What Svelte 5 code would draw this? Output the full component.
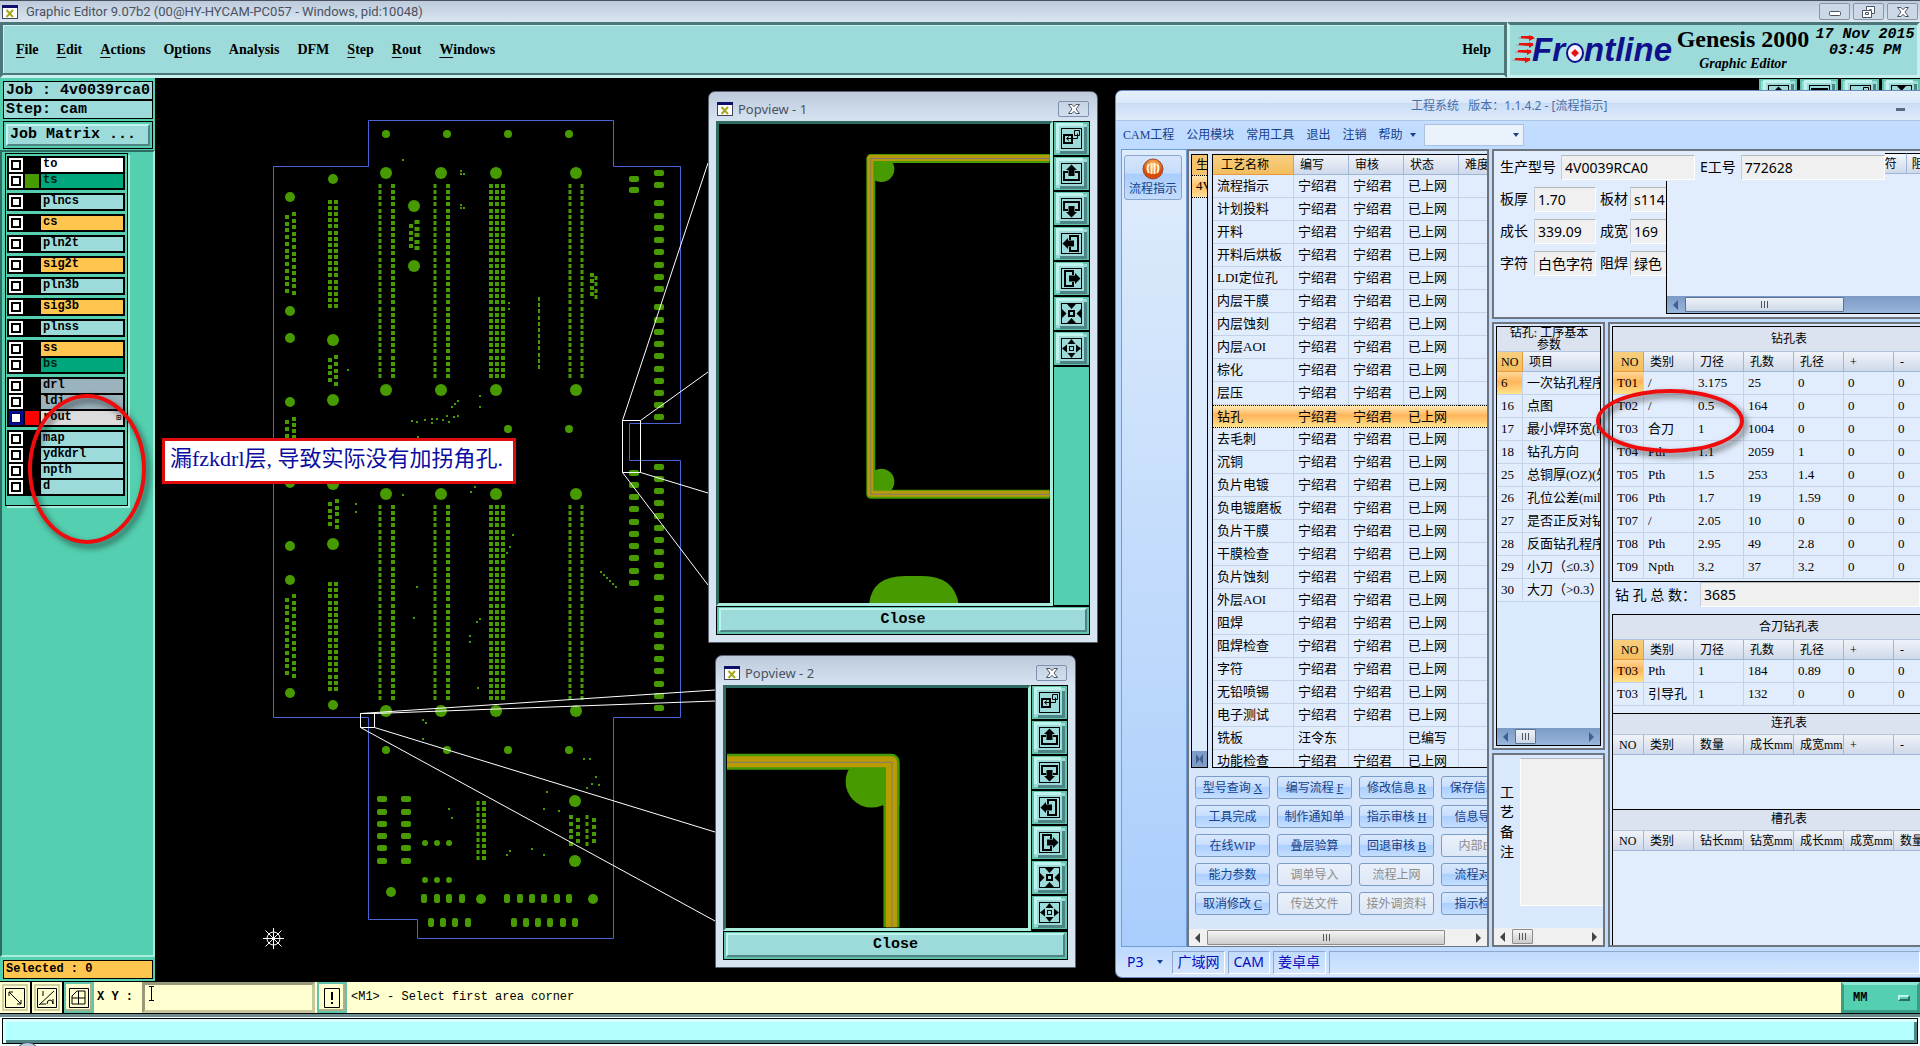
<script>
  const menus = [
    ['', 'F', 'ile'],
    ['', 'E', 'dit'],
    ['', 'A', 'ctions'],
    ['O', 'p', 'tions'],
    ['Analysis', '', ''],
    ['DFM', '', ''],
    ['', 'S', 'tep'],
    ['', 'R', 'out'],
    ['', 'W', 'indows']
  ];

  const layerGroups = [
    [{ name: 'to', kind: 'white' }, { name: 'ts', kind: 'mask', swatch: 'green' }],
    [{ name: 'plncs', kind: 'plane' }],
    [{ name: 'cs', kind: 'signal' }],
    [{ name: 'pln2t', kind: 'plane' }],
    [{ name: 'sig2t', kind: 'signal' }],
    [{ name: 'pln3b', kind: 'plane' }],
    [{ name: 'sig3b', kind: 'signal' }],
    [{ name: 'plnss', kind: 'plane' }],
    [{ name: 'ss', kind: 'signal' }, { name: 'bs', kind: 'mask' }],
    [{ name: 'drl', kind: 'drill' }, { name: 'ldi', kind: 'drill' }, { name: 'rout', kind: 'rout', swatch: 'red', active: true }],
    [{ name: 'map', kind: 'plane' }, { name: 'ydkdrl', kind: 'plane' }, { name: 'npth', kind: 'plane' }, { name: 'd', kind: 'plane' }]
  ];

  // board drawing: round pads are [x, y, r]
  const rounds = [];
  for (const y of [173, 390, 494, 711]) {
    for (const x of [386, 441, 496, 576]) rounds.push([x, y, 6]);
  }
  for (const y of [134, 750]) {
    for (const x of [386, 447, 508, 569]) rounds.push([x, y, 4]);
  }
  rounds.push(
    [333, 179, 5], [290, 197, 5], [290, 311, 5], [290, 338, 5], [333, 340, 6], [333, 400, 6],
    [290, 402, 5], [414, 206, 6], [414, 266, 6], [508, 429, 4], [569, 429, 4], [290, 483, 5],
    [333, 484, 6], [333, 544, 6], [290, 546, 5], [290, 580, 5], [290, 693, 5], [333, 705, 5],
    [575, 801, 6], [575, 861, 6], [391, 892, 5], [481, 899, 5], [593, 899, 5]
  );
  for (const y of [843, 880]) {
    for (const x of [425, 437, 449]) rounds.push([x, y, 3]);
  }

  // pad columns: x, first y, last y, rows, width
  const columns = [
    [287, 217, 291, 12, 4], [294, 214, 293, 13, 4], [330, 202, 306, 18, 4], [336, 202, 306, 18, 4],
    [330, 360, 380, 4, 4], [336, 357, 384, 5, 4], [411, 226, 246, 4, 4], [417, 222, 248, 5, 5],
    [287, 422, 436, 3, 4], [294, 419, 437, 4, 4], [330, 504, 524, 4, 4], [337, 501, 527, 5, 4],
    [330, 584, 689, 18, 4], [336, 584, 689, 18, 4], [287, 600, 673, 12, 4], [294, 596, 676, 13, 4],
    [592, 275, 294, 4, 4], [596, 278, 297, 4, 3], [539, 299, 367, 12, 2],
    [478, 803, 858, 10, 3], [484, 803, 858, 10, 4], [571, 817, 844, 5, 4], [578, 820, 841, 4, 4],
    [587, 817, 844, 5, 3], [594, 820, 841, 4, 4]
  ];
  for (const [top, bottom] of [[186, 376], [507, 698]]) {
    for (const [x, w] of [[380, 3], [393, 4], [435, 3], [448, 4], [491, 4], [497, 4], [503, 4], [570, 3], [582, 3]]) {
      columns.push([x, top, bottom, 32, w]);
    }
  }
  const pads = columns.flatMap(([x, first, last, rows, w]) =>
    Array.from({ length: rows }, (_, i) => {
      const y = first + ((last - first) * i) / (rows - 1);
      return { x: x - w / 2, y: Math.round(y) - 2, w };
    })
  );

  const wide = [];
  for (const y of [173, 185, 203, 216, 228, 240, 252, 265, 277, 289, 307, 320, 332, 344, 356, 369, 381, 393, 405, 417,
    467, 479, 491, 503, 516, 528, 540, 552, 565, 577, 598, 610, 622, 635, 647, 659, 671, 684, 696, 708]) wide.push([659, y]);
  for (const y of [179, 190, 473, 485, 497, 509, 522, 534, 546, 558, 571, 583]) wide.push([634, y]);
  for (const y of [799, 812, 824, 836, 848, 861]) wide.push([382, y], [406, y]);

  const tall = [
    ...[424, 437, 449, 462, 507, 520, 532, 544, 557, 569].map((x) => [x, 898]),
    ...[431, 443, 455, 468, 514, 526, 538, 550, 563, 575].map((x) => [x, 922])
  ];

  const vias = [
    [403, 160], [461, 171], [461, 174], [464, 174], [461, 205], [461, 208], [464, 208], [509, 303], [509, 309],
    [348, 370], [458, 401], [455, 404], [452, 407], [480, 396], [480, 407], [412, 421], [417, 422], [425, 420],
    [432, 419], [432, 423], [437, 419], [443, 420], [447, 416], [449, 422], [454, 417], [458, 416], [418, 437],
    [403, 495], [475, 487], [471, 492], [356, 504], [356, 512], [513, 535], [510, 547], [507, 553], [417, 587],
    [414, 618], [480, 619], [477, 622], [470, 636], [470, 642], [478, 688], [601, 572], [604, 575], [607, 578],
    [610, 581], [613, 584], [616, 587], [423, 720], [426, 723], [423, 739], [584, 759], [590, 759], [596, 777],
    [592, 784], [599, 785], [587, 788], [547, 792], [544, 809], [559, 811], [449, 809], [452, 818], [510, 851],
    [507, 855], [532, 849], [544, 855]
  ];

  const names = ['流程指示', '计划投料', '开料', '开料后烘板', 'LDI定位孔', '内层干膜', '内层蚀刻', '内层AOI', '棕化', '层压', '钻孔',
    '去毛刺', '沉铜', '负片电镀', '负电镀磨板', '负片干膜', '干膜检查', '负片蚀刻', '外层AOI', '阻焊', '阻焊检查', '字符',
    '无铅喷锡', '电子测试', '铣板', '功能检查'];
  const steps = names.map((name) =>
    name === '铣板' ? [name, '汪令东', '', '已编写'] : [name, '宁绍君', '宁绍君', '已上网']
  );

  const actions = [
    ['型号查询', 'X'], ['编写流程', 'F'], ['修改信息', 'R'], ['保存信息', 'S'],
    ['工具完成'], ['制作通知单'], ['指示审核', 'H'], ['信息导入'],
    ['在线WIP'], ['叠层验算'], ['回退审核', 'B'], ['内部EQ', '', true],
    ['能力参数'], ['调单导入', '', true], ['流程上网', '', true], ['流程对比'],
    ['取消修改', 'C'], ['传送文件', '', true], ['接外调资料', '', true], ['指示检查']
  ];

  const params = [
    ['6', '一次钻孔程序'], ['16', '点图'], ['17', '最小焊环宽(mil)'], ['18', '钻孔方向'], ['25', '总铜厚(OZ)(外)'],
    ['26', '孔位公差(mil)'], ['27', '是否正反对钻'], ['28', '反面钻孔程序'], ['29', '小刀（≤0.3）'], ['30', '大刀（>0.3）']
  ];

  const drillHead = ['NO', '类别', '刀径', '孔数', '孔径', '+', '-'];
  const drills = [
    ['T01', '/', '3.175', '25', '0', '0', '0'],
    ['T02', '/', '0.5', '164', '0', '0', '0'],
    ['T03', '合刀', '1', '1004', '0', '0', '0'],
    ['T04', 'Pth', '1.1', '2059', '1', '0', '0'],
    ['T05', 'Pth', '1.5', '253', '1.4', '0', '0'],
    ['T06', 'Pth', '1.7', '19', '1.59', '0', '0'],
    ['T07', '/', '2.05', '10', '0', '0', '0'],
    ['T08', 'Pth', '2.95', '49', '2.8', '0', '0'],
    ['T09', 'Npth', '3.2', '37', '3.2', '0', '0']
  ];
  const merged = [
    ['T03', 'Pth', '1', '184', '0.89', '0', '0'],
    ['T03', '引导孔', '1', '132', '0', '0', '0']
  ];

  const tools = ['area', 'up', 'down', 'left', 'right', 'in', 'out'];
</script>

{#snippet xicon()}
  <svg class="xicon" width="16" height="14" viewBox="0 0 16 14" aria-hidden="true">
    <rect x="0.5" y="0.5" width="15" height="13" fill="#fff" stroke="#445" />
    <rect width="16" height="3" fill="#10106a" />
    <path d="M4.500 5l6.500 7M11 5l-6.500 7" stroke="#a8a820" stroke-width="2" />
  </svg>
{/snippet}

{#snippet closeicon()}
  <svg width="14" height="12" viewBox="0 0 14 12" aria-hidden="true">
    <path d="M1.500 1.500h3.500l2 2.200 2-2.200h3.500L9 6l3.500 4.500H9L7 8.300 5 10.500H1.500L5 6z" fill="#fff" stroke="#4a5463" />
  </svg>
{/snippet}

{#snippet tool(kind)}
  <button class="tool" aria-label={kind}>
    <svg width="21" height="21" viewBox="0 0 21 21" aria-hidden="true">
      <rect x="0.5" y="0.5" width="20" height="20" fill="none" stroke="#000" />
      {#if kind === 'area'}
        <rect x="3" y="7" width="8" height="8" fill="none" stroke="#000" stroke-width="2" />
        <path d="M13.500 2.500h5v5h-5zM16.500 5.500v5H6M8 8.500l-2.500 2L8 12.500" fill="none" stroke="#000" />
      {:else if kind === 'in'}
        <path d="M6 1h9l-4.500 5zM6 20h9l-4.500-5zM1 6v9l4.500-4.500zM20 6v9l-4.500-4.500z" />
        <rect x="8" y="8" width="5" height="5" fill="none" stroke="#000" stroke-width="2" />
      {:else if kind === 'out'}
        <path d="M6.500 6h8l-4-5zM6.500 15h8l-4 5zM6 6.500v8l-5-4zM15 6.500v8l5-4z" />
        <rect x="8.500" y="8.500" width="4" height="4" fill="none" stroke="#000" />
      {:else}
        <g class="turn-{kind}">
          <path d="M7 9H3v8h15V9h-4" fill="none" stroke="#000" stroke-width="2" />
          <path d="M10.500 1.500L16 7h-2.500v6h-6V7H5z" />
        </g>
      {/if}
    </svg>
  </button>
{/snippet}

{#snippet scroller(look)}
  <div class="scroller {look}" aria-hidden="true">
    <svg width="6" height="10" viewBox="0 0 6 10"><path d="M5 0v10L0 5z" fill="currentColor" /></svg>
    <span class="track"><span class="thumb"><i></i><i></i><i></i></span></span>
    <svg class="end" width="6" height="10" viewBox="0 0 6 10"><path d="M1 0v10l5-5z" fill="currentColor" /></svg>
  </div>
{/snippet}

{#snippet holes(title, head, rows, lit)}
  <table class="grid holes">
    <caption>{title}</caption>
    <thead>
      <tr>{#each head as h, i}<th class:hot={lit && i === 0}>{h}</th>{/each}</tr>
    </thead>
    <tbody>
      {#each rows as row, r}
        <tr>{#each row as cell, i}<td class:hot={r === 0 && i === 0}>{cell}</td>{/each}</tr>
      {/each}
    </tbody>
  </table>
{/snippet}

<div class="screen">
  <header class="titlebar">
    {@render xicon()}
    <h1>Graphic Editor 9.07b2 (00@HY-HYCAM-PC057 - Windows, pid:10048)</h1>
    <div class="winbtns">
      <button aria-label="Minimize"><svg width="12" height="12"><rect x="0.5" y="5.5" width="11" height="4" rx="1" fill="#fff" stroke="#4a5463" /></svg></button>
      <button aria-label="Restore"><svg width="13" height="12"><path d="M4.500.500h8v7h-3v4h-9v-7h4z" fill="#fff" stroke="#4a5463" /><path d="M3.500 6.500h3v2h-3zM4.500 4.500h5v3M7.500 3.500h2" fill="none" stroke="#4a5463" /></svg></button>
      <button aria-label="Close">{@render closeicon()}</button>
    </div>
  </header>

  <div class="topbar">
    <nav class="menubar">
      {#each menus as [before, key, after]}
        <button>{before}{#if key}<u>{key}</u>{/if}{after}</button>
      {/each}
      <button class="help">Help</button>
    </nav>
    <section class="brand">
      <svg class="logo" width="160" height="40" viewBox="0 0 160 40" role="img" aria-label="Frontline">
        <g fill="#e8120c">
          <path d="M4 8l12-1v-2l6 3-6 3v-2zM2 15l14-1v-2l5 3-5 3v-2zM1 22l13-1v-2l5 3-5 3v-2zM-2 30l14-1v-2l6 3-6 3v-2z" />
          <path d="M8 7h12M6 14h14M5 21h13M2 29h15" stroke="#e8120c" stroke-width="2" />
        </g>
        <g class="wordmark" fill="#10108c">
          <text x="19" y="31">Fr</text>
          <text x="71" y="31">ntline</text>
        </g>
        <ellipse cx="62" cy="23" rx="8" ry="9" fill="#f4f7ff" stroke="#10108c" stroke-width="2" />
        <path d="M62 19l4 4-4 4-4-4z" fill="#e8120c" />
      </svg>
      <div class="product">
        <strong>Genesis 2000</strong>
        <em>Graphic Editor</em>
      </div>
      <div class="clock"><span>17 Nov 2015</span><span>03:45 PM</span></div>
    </section>
  </div>

  <main class="work">
    <aside class="sidebar">
      <div class="job">
        <p>Job : 4v0039rca0</p>
        <p>Step: cam</p>
      </div>
      <div class="matrix"><button>Job Matrix ...</button></div>
      <div class="layers">
        <div class="layerlist">
          {#each layerGroups as group}
            <div class="group">
              {#each group as layer}
                <label class="layer {layer.kind}">
                  <input type="checkbox" class:active={layer.active} />
                  <span class="swatch {layer.swatch ?? ''}"></span>
                  <span class="name">{layer.name}{#if layer.active}<b>⊞</b>{/if}</span>
                </label>
              {/each}
            </div>
          {/each}
        </div>
      </div>
      <p class="selected">Selected : 0</p>
      <span class="ring layers-ring"></span>
    </aside>

    <div class="stage">
      <svg class="board" viewBox="155 78 1765 903" preserveAspectRatio="xMinYMin slice" aria-label="PCB panel">
        <g fill="#479a00">
          {#each rounds as [x, y, r]}<circle cx={x} cy={y} {r} />{/each}
          {#each wide as [x, y]}<rect x={x - 5} y={y - 3} width="10" height="6" rx="2" />{/each}
          {#each tall as [x, y]}<rect x={x - 3} y={y - 4} width="6" height="9" rx="2" />{/each}
          {#each vias as [x, y]}<rect x={x - 1} y={y - 1} width="2" height="2" />{/each}
          {#each pads as p}<rect x={p.x} y={p.y} width={p.w} height="4" />{/each}
        </g>
        <path
          d="M273.500 166.500H368.500V120.500H613.500V166.500H680.500V423.500H629.500V460.500H680.500V717.500H613.500V938.500H417.500V919.500H368.500V717.500H273.500Z"
          fill="none" stroke="#4864d8" />
        <g fill="none" stroke="#fff">
          <path d="M622.500 420.500h18v52h-18zM622.500 420.500L708 163M640.500 420.500L708 372M640.500 472.500L708 493M622.500 472.500L708 585" />
          <path d="M360.500 713.500h14v14h-14zM360.500 713.500L715 690M374.500 713.500L715 701M374.500 727.500L715 832M360.500 727.500L715 921" />
          <circle cx="273.500" cy="938.500" r="6.500" />
          <path d="M263 938.500h21M273.500 928v21M265.500 930.500l16 16M281.500 930.500l-16 16" />
        </g>
      </svg>

      <p class="callout">漏fzkdrl层, 导致实际没有加拐角孔.</p>

      <div class="sidetools">
        {@render tool('up')}{@render tool('down')}{@render tool('area')}{@render tool('in')}
      </div>

      <section class="popview one">
        <header>{@render xicon()}<h2>Popview - 1</h2><button class="x" aria-label="Close window">{@render closeicon()}</button></header>
        <div class="popbody">
          <div class="view">
            <svg viewBox="719 124 331 478" preserveAspectRatio="xMinYMin slice" aria-hidden="true">
              <g fill="#479a00">
                <circle cx="881" cy="169" r="13" />
                <circle cx="881" cy="481" r="13" />
                <path d="M869 602q3-27 36-27h17q31 0 36 27z" />
              </g>
              <g fill="none" stroke-linejoin="round">
                <path d="M1049 158.500H870.500V493.500H1049" stroke="#479a00" stroke-width="9" />
                <path d="M1049 158H870V493H1049" stroke="#b79a08" stroke-width="6" />
                <path d="M1049 158.500H870.500V493.500H1049" stroke="#80787a" />
              </g>
            </svg>
          </div>
          <div class="tools">{#each tools as t}{@render tool(t)}{/each}</div>
        </div>
        <div class="closebar"><button>Close</button></div>
      </section>

      <section class="popview two">
        <header>{@render xicon()}<h2>Popview - 2</h2><button class="x" aria-label="Close window">{@render closeicon()}</button></header>
        <div class="popbody">
          <div class="view">
            <svg viewBox="726 688 303 241" preserveAspectRatio="xMinYMin slice" aria-hidden="true">
              <circle cx="872" cy="782" r="26" fill="#479a00" />
              <path d="M883 762h17v44h-17z" fill="#479a00" />
              <g fill="none" stroke-linejoin="round">
                <path d="M727 762H892V928" stroke="#479a00" stroke-width="16" />
                <path d="M727 762H892V928" stroke="#b99c04" stroke-width="11" />
                <path d="M727 762.500H892.500V928" stroke="#80787a" />
              </g>
            </svg>
          </div>
          <div class="tools">{#each tools as t}{@render tool(t)}{/each}</div>
        </div>
        <div class="closebar"><button>Close</button></div>
      </section>

      <section class="app">
        <header class="apptitle"><h2>工程系统&nbsp;&nbsp; 版本：1.1.4.2 - [流程指示]</h2><button class="min" aria-label="Minimize"></button></header>
        <nav class="appmenu">
          <button>CAM工程</button><button>公用模块</button><button>常用工具</button>
          <button>退出</button><button>注销</button><button>帮助</button>
          <span class="caret"></span>
          <span class="combo"><select aria-label="模块"><option></option></select><span class="caret"></span></span>
        </nav>
        <div class="appbody">
          <div class="modules">
            <button>
              <svg width="22" height="22" viewBox="0 0 22 22" aria-hidden="true">
                <defs><radialGradient id="orb" cy="0.3"><stop offset="0" stop-color="#ffd070" /><stop offset="1" stop-color="#d84a08" /></radialGradient></defs>
                <circle cx="11" cy="11" r="10" fill="url(#orb)" stroke="#9a4a3a" />
                <path d="M7 6q-3 4 0 9M9.500 5v11M12.500 5v11M15 6q3 4 0 9" fill="none" stroke="#fff2d0" stroke-width="2" />
              </svg>
              流程指示
            </button>
          </div>

          <div class="flow">
            <div class="grids">
              <div class="strip">
                <span class="striphead">生</span><span class="stripcell">4V</span>
                <svg class="stripend" width="15" height="16" viewBox="0 0 15 16" aria-hidden="true"><path d="M4 3v10l4-5zM11 3v10L7 8z" fill="#3d5f92" /></svg>
              </div>
              <div class="stepbox">
                <table class="grid steps">
                  <thead><tr><th class="hot">工艺名称</th><th>编写</th><th>审核</th><th>状态</th><th>难度</th></tr></thead>
                  <tbody>
                    {#each steps as step}
                      <tr class:current={step[0] === '钻孔'}>
                        {#each step as cell}<td>{cell}</td>{/each}<td></td>
                      </tr>
                    {/each}
                  </tbody>
                </table>
              </div>
            </div>
            <div class="actions">
              {#each actions as [label, key, off]}
                <button disabled={off}>{label}{#if key}&nbsp;<u>{key}</u>{/if}</button>
              {/each}
            </div>
            {@render scroller('grey long')}
          </div>

          <div class="detail">
            <div class="summary">
              <div class="line">
                <label for="model">生产型号</label><input id="model" class="model" value="4V0039RCA0" />
                <label for="eno">E工号</label><input id="eno" class="eno" value="772628" />
                <span class="cut">符</span><span class="cut">阻</span>
              </div>
              <div class="lower">
                <div class="fields">
                  <label for="thick">板厚</label><input id="thick" value="1.70" />
                  <label for="mat">板材</label><input id="mat" value="s1141" />
                  <label for="len">成长</label><input id="len" value="339.09" />
                  <label for="wid">成宽</label><input id="wid" value="169" />
                  <label for="silk">字符</label><input id="silk" value="白色字符" />
                  <label for="mask">阻焊</label><input id="mask" value="绿色" />
                </div>
                <div class="blank">{@render scroller('blue wide')}</div>
              </div>
            </div>

            <div class="panes">
              <div class="leftpanes">
                <div class="pane parampane">
                  <div class="parambox">
                    <table class="grid params">
                      <caption>钻孔: 工序基本<br />参数</caption>
                      <thead><tr><th class="hot">NO</th><th>项目</th></tr></thead>
                      <tbody>
                        {#each params as [no, item], i}
                          <tr><td class:hot={i === 0}>{no}</td><td>{item}</td></tr>
                        {/each}
                      </tbody>
                    </table>
                    {@render scroller('blue short')}
                  </div>
                </div>
                <div class="pane notepane">
                  <div class="note">
                    <label for="note">工艺备注</label>
                    <textarea id="note"></textarea>
                  </div>
                  {@render scroller('grey short')}
                </div>
              </div>
              <div class="pane holepane">
                <div class="holebox drillbox">{@render holes('钻孔表', drillHead, drills, true)}</div>
                <div class="total"><label for="total">钻 孔 总 数：</label><input id="total" value="3685" /></div>
                <div class="holebox mergebox">{@render holes('合刀钻孔表', drillHead, merged, true)}</div>
                <div class="holebox linkbox">{@render holes('连孔表', ['NO', '类别', '数量', '成长mm', '成宽mm', '+', '-'], [], false)}</div>
                <div class="holebox slotbox">{@render holes('槽孔表', ['NO', '类别', '钻长mm', '钻宽mm', '成长mm', '成宽mm', '数量'], [], false)}</div>
              </div>
            </div>
          </div>
        </div>
        <footer class="status">
          <span class="port">P3</span><span class="caret"></span>
          <span class="cell">广域网</span><span class="cell">CAM</span><span class="cell">姜卓卓</span><span class="cell rest"></span>
        </footer>
        <span class="ring drill-ring"></span>
      </section>
    </div>
  </main>

  <div class="prompt">
    <button class="mode" aria-label="Window select"><svg width="20" height="20"><path d="M.500.500h19v19H.500zM4 4l12 12M4 8V4h4M16 12v4h-4" fill="none" stroke="#000" /></svg></button>
    <button class="mode" aria-label="Angle"><svg width="20" height="20"><path d="M.500.500h19v19H.500zM2 17L17 3M6 3v5M3 16h6M10 16q0-4 3-4t3 4M16 11v5" fill="none" stroke="#000" /></svg></button>
    <button class="mode framed" aria-label="Grid"><svg width="20" height="20"><path d="M.500.500h19v19H.500zM3 8l5-5h8v13H3zM3 10h13M9.500 3v13" fill="none" stroke="#000" /></svg></button>
    <label for="xy">X Y :</label>
    <span class="entry">
      <input id="xy" />
      <svg width="7" height="15" viewBox="0 0 7 15" aria-hidden="true"><path d="M1 .500h5M3.500.500v14M1 14.500h5" fill="none" stroke="#000" /></svg>
    </span>
    <button class="mode framed alert" aria-label="Alert"><svg width="16" height="20"><path d="M.500.500h15v19H.500z" fill="none" stroke="#000" /><path d="M8 4v8M8 14v2" stroke="#000" stroke-width="2" /></svg></button>
    <p>&lt;M1&gt; - Select first area corner</p>
    <button class="units">MM<i></i></button>
  </div>
  <footer class="messages"><div></div><span class="orb"></span></footer>
</div>

<style>
  :global(body) {
    margin: 0;
    background: #000;
  }

  .screen {
    --teal: #54cfb0;
    --aqua: #9cdbda;
    --green: #479a00;
    --cjk: "Liberation Serif", "Noto Sans CJK SC", serif;
    --ui: "Noto Sans", "Noto Sans CJK SC", sans-serif;
    --mono: "Liberation Mono", monospace;
    display: flex;
    flex-direction: column;
    min-height: 100vh;
    overflow: hidden;
    font-family: var(--mono);
    color: #000;
  }

  * {
    box-sizing: border-box;
  }

  p, h1, h2 {
    margin: 0;
    font-weight: normal;
  }

  button, input, select, textarea {
    margin: 0;
    padding: 0;
    border: 0;
    border-radius: 0;
    font: inherit;
    color: inherit;
    background: none;
    appearance: none;
  }

  .titlebar {
    display: flex;
    align-items: center;
    height: 22px;
    padding: 0 2px;
    gap: 8px;
    border-top: 1px solid #4a5260;
    background: linear-gradient(#bccadb, #dbe6f2);
  }

  .titlebar h1 {
    flex: 1;
    font: 13px/20px Roboto, sans-serif;
    color: #4a5260;
  }

  .winbtns {
    display: flex;
    gap: 3px;
  }

  .winbtns button {
    display: grid;
    place-items: center;
    width: 31px;
    height: 17px;
    border: 1px solid #8894a8;
    border-radius: 2px;
    background: #ccd8e6;
  }

  .topbar {
    display: flex;
    height: 56px;
    background: #4d7678;
  }

  .menubar {
    flex: 1;
    display: flex;
    align-items: center;
    gap: 18px;
    padding: 0 13px;
    border: 3px solid;
    border-color: #4d7678 #4d7678 #c8f0ee #4d7678;
    background: var(--aqua);
    box-shadow: inset 0 -2px #4d7678, inset 1px 1px #c8f4f4;
    font: bold 14px/20px "Liberation Serif", serif;
  }

  .menubar .help {
    margin-left: auto;
  }

  u {
    text-underline-offset: 3px;
  }

  .brand {
    display: flex;
    width: 413px;
    padding-left: 3px;
    border: 3px solid;
    border-color: #4d7678 #c8f0ee #c8f0ee #c8f0ee;
    background: var(--aqua);
  }

  .logo {
    margin-top: 5px;
    overflow: visible;
  }

  .wordmark {
    font: italic bold 33px "Liberation Sans", sans-serif;
  }

  .product {
    display: flex;
    flex-direction: column;
    width: 140px;
    text-align: center;
    font-family: "Liberation Serif", serif;
  }

  .product strong {
    font-size: 24px;
    line-height: 28px;
  }

  .product em {
    font: italic bold 14px/22px "Liberation Serif", serif;
  }

  .clock {
    display: flex;
    flex-direction: column;
    align-items: center;
    flex: 1;
    padding-top: 2px;
    font: italic bold 15px/16px var(--mono);
    white-space: nowrap;
  }

  .work {
    flex: 1;
    display: flex;
    background: #000;
  }

  .sidebar {
    position: relative;
    display: flex;
    flex-direction: column;
    width: 155px;
    padding: 3px 2px 2px 3px;
    background: var(--teal);
  }

  .job p {
    height: 19px;
    padding: 0 2px;
    border: 1px solid #000;
    background: var(--aqua);
    font: bold 15px/17px var(--mono);
    white-space: nowrap;
    overflow: hidden;
  }

  .matrix {
    margin: 2px 0 1px;
    padding: 2px;
    border: 1px solid #000;
  }

  .matrix button {
    width: 100%;
    height: 22px;
    padding-left: 2px;
    border: 2px solid;
    border-color: #c4f2f0 #4d8486 #4d8486 #c4f2f0;
    background: var(--aqua);
    font: bold 15px/18px var(--mono);
    text-align: left;
  }

  .layers {
    flex: 1;
    margin: 0 -2px 3px -3px;
    border: 2px solid;
    border-color: #2f6b60 #a8ecdc #a8ecdc #2f6b60;
    background: var(--teal);
  }

  .layerlist {
    display: flex;
    flex-direction: column;
    gap: 3px;
    width: 123px;
    margin: 1px 0 0 3px;
    padding: 2px 2px 9px 1px;
    border: 1px solid #000;
    box-shadow: 2px 2px #a8ecdc;
  }

  .group {
    display: flex;
    flex-direction: column;
    gap: 2px;
    padding: 2px;
    background: #000;
  }

  .layer {
    display: grid;
    grid-template-columns: 14px 14px 1fr;
    gap: 2px;
    height: 14px;
    font: bold 12px/13px var(--mono);
  }

  .layer input {
    width: 14px;
    height: 14px;
    border: 2px solid #fff;
    background: #fff;
    box-shadow: inset 0 0 0 2px #000;
  }

  .layer input.active {
    border-color: #0a0a9a;
    box-shadow: inset 0 0 0 1px #000060;
  }

  .swatch.green {
    background: var(--green);
  }

  .swatch.red {
    background: #f00;
  }

  .name {
    display: flex;
    justify-content: space-between;
    padding: 0 2px;
    background: var(--aqua);
  }

  .name b {
    font-size: 8px;
  }

  .white .name {
    background: #fff;
  }

  .mask .name {
    background: #00a67c;
    color: #021;
  }

  .signal .name {
    background: #ffc64f;
  }

  .drill .name {
    background: #9bb3bd;
  }

  .rout .name {
    background: #dcdcdc;
  }

  .selected {
    height: 19px;
    padding: 0 2px;
    border: 1px solid #000;
    background: #ffc64f;
    font: bold 12px/17px var(--mono);
  }

  .ring {
    position: absolute;
    z-index: 5;
    border: 4px solid #ee0c0c;
    border-radius: 50%;
    filter: drop-shadow(3px 4px 3px rgba(0, 0, 0, 0.6));
    pointer-events: none;
  }

  .layers-ring {
    left: 28px;
    top: 316px;
    width: 118px;
    height: 150px;
  }

  .drill-ring {
    left: 480px;
    top: 298px;
    width: 148px;
    height: 64px;
  }

  .stage {
    position: relative;
    flex: 1;
    min-width: 0;
    overflow: hidden;
  }

  .board {
    position: absolute;
    width: 100%;
    height: 100%;
  }

  .callout {
    position: absolute;
    left: 7px;
    top: 360px;
    padding: 4px 10px 8px 5px;
    border: 3px solid #e00c0c;
    background: #fff;
    color: #0c0ca0;
    font: 22px/28px var(--cjk);
    white-space: nowrap;
  }

  .sidetools {
    position: absolute;
    right: 0;
    top: 1px;
    display: grid;
    grid-template-columns: repeat(4, 38px);
    gap: 3px;
  }

  .popview {
    position: absolute;
    display: flex;
    flex-direction: column;
    padding: 0 7px 7px;
    border: 1px solid #59616c;
    border-radius: 7px 7px 0 0;
    background: linear-gradient(#bccadb, #d7e4f2 30px);
  }

  .popview.one {
    left: 553px;
    top: 13px;
    width: 390px;
    height: 552px;
  }

  .popview.two {
    left: 560px;
    top: 577px;
    width: 361px;
    height: 313px;
  }

  .popview header {
    display: flex;
    align-items: center;
    gap: 5px;
    height: 29px;
    padding: 5px 1px 0;
  }

  .popview h2 {
    flex: 1;
    font: 13px/20px var(--ui);
    color: #4a5260;
  }

  .popview .x {
    display: grid;
    place-items: center;
    width: 31px;
    height: 16px;
    border: 1px solid #8090b0;
    border-radius: 2px;
  }

  .popbody {
    flex: 1;
    display: flex;
    min-height: 0;
  }

  .view {
    flex: 1;
    min-width: 0;
    border: 3px solid;
    border-color: #2f6b60 #a8ecdc #a8ecdc #2f6b60;
    background: #000;
  }

  .view svg {
    display: block;
    width: 100%;
    height: 100%;
  }

  .tools {
    width: 37px;
    border: 1px solid #000;
    background: var(--teal);
  }

  .tools .tool {
    margin-bottom: 2px;
    box-shadow: 0 2px #000;
  }

  .tool {
    display: grid;
    place-items: center;
    width: 100%;
    height: 33px;
    border: 2px solid #5fc4ab;
    background: var(--aqua);
  }

  .tool svg {
    box-shadow: 0 0 0 2px var(--aqua), -2px -2px 0 3px #bff4ee, 2px 2px 0 3px #4d8486;
  }

  .turn-down {
    transform: rotate(180deg);
    transform-origin: center;
  }

  .turn-left {
    transform: rotate(-90deg);
    transform-origin: center;
  }

  .turn-right {
    transform: rotate(90deg);
    transform-origin: center;
  }

  .closebar {
    padding: 1px 2px 2px;
    border: 1px solid #000;
    background: #5fc4ab;
  }

  .closebar button {
    display: block;
    width: 100%;
    height: 24px;
    border: 2px solid;
    border-color: #bff4ee #4d8486 #4d8486 #bff4ee;
    background: var(--aqua);
    font: bold 15px/20px var(--mono);
  }

  /* process system window */
  .app {
    position: absolute;
    left: 960px;
    right: 0;
    top: 12px;
    bottom: 3px;
    display: flex;
    flex-direction: column;
    padding-left: 5px;
    border: 1px solid #6a8cc0;
    border-right: 0;
    border-radius: 7px 0 0 7px;
    overflow: hidden;
    background: linear-gradient(#dfeafa, #bfdbff 40px, #bfdbff 860px, #d6e6fb);
    font: 13px/20px var(--cjk);
  }

  .apptitle {
    display: flex;
    align-items: center;
    height: 30px;
    margin-left: -5px;
    border-bottom: 1px solid #a8c4ea;
    background: linear-gradient(#e6f0fc, #dbe8f9 40%, #cbddf5 42%, #deebfb);
  }

  .apptitle h2 {
    flex: 1;
    padding-left: 295px;
    font: 12px/20px var(--ui);
    color: #4a6ea8;
  }

  .min {
    width: 9px;
    height: 3px;
    margin: 8px 15px 0 0;
    background: #5a6a84;
  }

  .appmenu {
    display: flex;
    align-items: center;
    gap: 12px;
    height: 28px;
    padding-left: 2px;
    font: 12px/20px var(--cjk);
    color: #15428b;
  }

  .appmenu > .caret {
    margin: 0 -4px;
  }

  .combo {
    position: relative;
    display: flex;
  }

  .combo select {
    width: 100px;
    height: 22px;
    border: 1px solid #abc1de;
    background: #eaf2fb;
  }

  .combo .caret {
    position: absolute;
    right: 5px;
    top: 9px;
  }

  .caret {
    border: 3px solid transparent;
    border-top: 4px solid #15428b;
    border-bottom: 0;
  }

  .appbody {
    flex: 1;
    display: flex;
    min-height: 0;
  }

  .modules {
    width: 66px;
    padding: 5px 2px;
    border: 1px solid #6f9dd9;
    background: linear-gradient(#dfecfb, #a9cdfc);
  }

  .modules button {
    display: flex;
    flex-direction: column;
    align-items: center;
    width: 58px;
    height: 45px;
    padding-top: 2px;
    border: 1px solid #8aa6cf;
    border-radius: 3px;
    background: linear-gradient(#d5e5fa, #c6ddfb 40%, #a9cdfc 42%, #c4dcfc);
    color: #15428b;
    font: 12px/18px var(--cjk);
    white-space: nowrap;
  }

  .flow {
    display: flex;
    flex-direction: column;
    width: 302px;
    overflow: hidden;
    border: 2px solid #70747c;
    border-bottom-width: 1px;
    background: #d7e6fb;
  }

  .grids {
    display: flex;
    gap: 4px;
    height: 614px;
    margin: 3px 0 0 2px;
  }

  .strip {
    display: flex;
    flex-direction: column;
    width: 17px;
    border: 1px solid #000;
    overflow: hidden;
    background: #dbeafd;
  }

  .strip span {
    flex: none;
    padding-left: 4px;
    white-space: nowrap;
  }

  .striphead {
    height: 20px;
    background: #f5c36c;
    font-size: 12px;
  }

  .stripcell {
    height: 23px;
    border: dotted #000;
    border-width: 1px 0;
    background: linear-gradient(#ffe7b0, #ffc268 45%, #ffdf9a);
  }

  .stripend {
    margin-top: auto;
    background: #7f9cc4;
  }

  .stepbox {
    flex: 1;
    min-width: 0;
    overflow: hidden;
    border: 1px solid #000;
    border-right: 0;
    background: #dfeafc;
  }

  .grid {
    border-collapse: separate;
    border-spacing: 0;
    table-layout: fixed;
    background: #e1ecfd;
  }

  .grid th, .grid td {
    height: 23px;
    padding: 0 0 0 4px;
    border: solid #c5d3e8;
    border-width: 0 1px 1px 0;
    text-align: left;
    white-space: nowrap;
    overflow: hidden;
    line-height: 20px;
  }

  .grid th {
    height: 20px;
    padding-left: 6px;
    border-color: #9eb6d8;
    background: linear-gradient(#f0f3f9, #cfd9ea);
    font-weight: normal;
    font-size: 12px;
    line-height: 18px;
  }

  .grid th.hot {
    padding-left: 8px;
    border-color: #e89a3c;
    background: linear-gradient(#f6cf80, #f3bd5e);
  }

  .grid td.hot {
    background: linear-gradient(#ffd898, #ffb559 45%, #ffe38a);
  }

  .grid caption {
    height: 25px;
    overflow: hidden;
    border-bottom: 1px solid #b4c4dc;
    background: #dbe3f1;
    font-size: 12px;
    line-height: 24px;
  }

  .steps {
    width: 310px;
  }

  .steps th {
    width: 55px;
  }

  .steps th:first-child {
    width: 81px;
  }

  .steps th:last-child {
    width: 64px;
  }

  .current td {
    border-top: 1px dotted #000;
    border-bottom: 1px dotted #000;
    border-right: 0;
    background: linear-gradient(#ffe9b4, #ffb55c 45%, #ffe28c);
    line-height: 19px;
  }

  .actions {
    display: grid;
    grid-template-columns: repeat(4, 75px);
    gap: 6px 7px;
    padding: 8px 0 12px 6px;
  }

  .actions button {
    height: 23px;
    border: 1px solid #7c9cc8;
    border-radius: 3px;
    background: linear-gradient(#d8e8fd, #c8dffe 45%, #abcfff 48%, #c4deff);
    color: #15428b;
    font: 12px/20px var(--cjk);
    white-space: nowrap;
  }

  .actions button:disabled {
    background: linear-gradient(#eaf1fb, #dde7f6);
    color: #8d8d8d;
  }

  .actions u {
    text-underline-offset: 1px;
  }

  .scroller {
    display: flex;
    align-items: center;
    height: 17px;
    margin-top: auto;
    padding: 0 6px;
    gap: 6px;
    background: #f0f0f0;
    color: #444;
  }

  .track {
    flex: 1;
    height: 100%;
    padding: 1px 0;
  }

  .thumb {
    display: flex;
    align-items: center;
    justify-content: center;
    gap: 2px;
    width: 21px;
    height: 15px;
    border: 1px solid #8c8c8c;
    border-radius: 1px;
    background: linear-gradient(#f4f4f4, #e0e0e0 50%, #ccc);
  }

  .long .thumb {
    width: 238px;
  }

  .thumb i {
    width: 1px;
    height: 7px;
    background: #555;
  }

  .blue {
    background: linear-gradient(#7b9ac5, #98b5da);
    color: #3d5f92;
  }

  .blue .thumb {
    border-color: #5c7396;
    background: linear-gradient(#edf2f8, #ccd8e8);
  }

  .wide .thumb {
    width: 159px;
  }

  .wide .end {
    display: none;
  }

  .detail {
    flex: 1;
    display: flex;
    flex-direction: column;
    gap: 3px;
    min-width: 0;
    margin-left: 3px;
  }

  .summary {
    height: 170px;
    padding: 2px 0 4px 6px;
    border: 2px solid #70747c;
    border-right: 0;
    overflow: hidden;
    background: #e1ecfd;
    font: 14px/22px var(--ui);
  }

  .line {
    display: flex;
    align-items: center;
    height: 28px;
    white-space: nowrap;
  }

  .line label {
    margin-right: 5px;
  }

  .summary input, .total input {
    width: 62px;
    height: 25px;
    padding: 0 3px;
    border: 1px solid;
    border-color: #b4b8be #fff #fff #c8ccd2;
    background: #f0f0f0;
    font: 14px/22px var(--ui);
  }

  .summary .model {
    width: 134px;
    margin-right: 5px;
  }

  .summary .eno {
    width: 144px;
  }

  .cut {
    flex: none;
    align-self: flex-start;
    width: 22px;
    height: 21px;
    border: solid #9eb6d8;
    border-width: 0 1px 1px 0;
    border-top: 1px solid #000;
    background: linear-gradient(#f4f6fa, #cfd9ea);
    font: 12px/20px var(--cjk);
  }

  .cut + .cut {
    padding-left: 5px;
  }

  .lower {
    display: flex;
  }

  .fields {
    display: grid;
    grid-template-columns: 34px 62px 34px 62px;
    grid-auto-rows: 32px;
    align-items: center;
    width: 166px;
    overflow: hidden;
    padding-top: 2px;
  }

  .fields label:nth-of-type(even) {
    padding-left: 4px;
  }

  .blank {
    flex: 1;
    display: flex;
    flex-direction: column;
    height: 133px;
    border: solid #000;
    border-width: 0 0 1px 1px;
  }

  .panes {
    flex: 1;
    display: flex;
    gap: 3px;
    min-height: 0;
  }

  .leftpanes {
    display: flex;
    flex-direction: column;
    gap: 3px;
    width: 113px;
  }

  .pane {
    border: 2px solid #70747c;
    background: #d9e8fc;
    overflow: hidden;
  }

  .parampane {
    height: 428px;
    padding: 2px;
  }

  .parambox {
    display: flex;
    flex-direction: column;
    height: 420px;
    border: 1px solid #000;
    overflow: hidden;
    background: #dbebfe;
  }

  .params {
    width: 140px;
  }

  .params caption {
    padding-right: 36px;
    line-height: 12px;
  }

  .params th:first-child {
    width: 26px;
  }

  .params th.hot {
    padding-left: 4px;
  }

  .notepane {
    flex: 1;
    display: flex;
    flex-direction: column;
  }

  .note {
    display: flex;
    padding-top: 3px;
  }

  .note label {
    width: 26px;
    padding: 24px 5px 0 6px;
    font: 14px/20px var(--ui);
  }

  .note textarea {
    flex: 1;
    min-width: 0;
    height: 148px;
    border: solid;
    border-width: 1px 0 1px 1px;
    border-color: #b4b8be #fff #fff #fff;
    background: #f0f0f0;
    resize: none;
  }

  .holepane {
    flex: 1;
    display: flex;
    flex-direction: column;
    min-width: 0;
    padding: 2px 0 0 2px;
    border-right: 0;
  }

  .holebox {
    flex: none;
    overflow: hidden;
    border: solid #000;
    border-width: 1px 0 0 1px;
    background: #e1ecfd;
  }

  .holes {
    width: 352px;
  }

  .holes th {
    width: 50px;
  }

  .holes th:first-child {
    width: 31px;
  }

  .holes th:last-child {
    width: 71px;
  }

  .drillbox {
    height: 256px;
    border-bottom-width: 1px;
  }

  .total {
    display: flex;
    align-items: center;
    height: 32px;
    padding-left: 3px;
    padding-bottom: 7px;
    font: 14px/20px var(--ui);
    white-space: nowrap;
  }

  .total input {
    flex: 1;
    margin-left: 4px;
  }

  .mergebox {
    height: 99px;
  }

  .linkbox {
    height: 96px;
  }

  .slotbox {
    flex: 1;
  }

  .linkbox caption, .slotbox caption {
    height: 21px;
    line-height: 18px;
  }

  .status {
    display: flex;
    align-items: center;
    height: 30px;
    gap: 3px;
    padding-left: 6px;
    color: #0a0ac0;
    font: 14px/20px var(--ui);
  }

  .port {
    margin-right: 11px;
  }

  .status .caret {
    margin-right: 6px;
  }

  .cell {
    height: 23px;
    padding: 0 5px 0 4px;
    border: 1px solid;
    border-color: #8fa8cc #fff #fff #8fa8cc;
  }

  .cell.rest {
    flex: 1;
  }

  .prompt {
    display: flex;
    align-items: stretch;
    height: 33px;
    border-top: 1px solid #000;
    border-bottom: 1px solid #000;
    background: #ffffcf;
    font: bold 12px/30px var(--mono);
  }

  .mode {
    display: grid;
    place-items: center;
    width: 32px;
    border-right: 2px solid #000;
    box-shadow: inset 0 0 0 2px #ffffcf, inset 0 0 0 4px #d0d0a4;
  }

  .mode.framed {
    width: 30px;
    border: 2px solid #5fc4ab;
    box-shadow: inset -2px -2px #b0b088;
  }

  .prompt label {
    padding: 0 9px 0 3px;
  }

  .entry {
    position: relative;
    display: flex;
    width: 173px;
    margin-right: 2px;
  }

  .entry input {
    width: 100%;
    border: 3px solid;
    border-color: #98987a #c8c8a0 #c8c8a0 #98987a;
  }

  .entry svg {
    position: absolute;
    left: 6px;
    top: 4px;
  }

  .prompt p {
    flex: 1;
    padding-left: 4px;
  }

  .units {
    display: flex;
    align-items: center;
    justify-content: space-between;
    width: 79px;
    padding: 0 7px 0 9px;
    border: 3px solid #3a9c86;
    border-top-color: #8fe6d2;
    background: var(--teal);
    font-weight: bold;
  }

  .units i {
    width: 12px;
    height: 6px;
    border: 2px solid;
    border-color: #bff4ee #2f6b60 #2f6b60 #bff4ee;
  }

  .messages {
    position: relative;
    height: 32px;
    padding: 1px 2px 3px;
    border-top: 3px solid #6c8c8e;
    background: #f4ffff;
    overflow: hidden;
  }

  .messages div {
    height: 26px;
    border: 1px solid #000;
    background: #b4ffff;
    box-shadow: inset 3px 3px #d8ffff, inset -3px -3px #4d8486;
  }

  .orb {
    position: absolute;
    left: 15px;
    top: 25px;
    width: 25px;
    height: 25px;
    border: 1px solid #456;
    border-radius: 50%;
    background: #b8cce0;
  }
</style>
